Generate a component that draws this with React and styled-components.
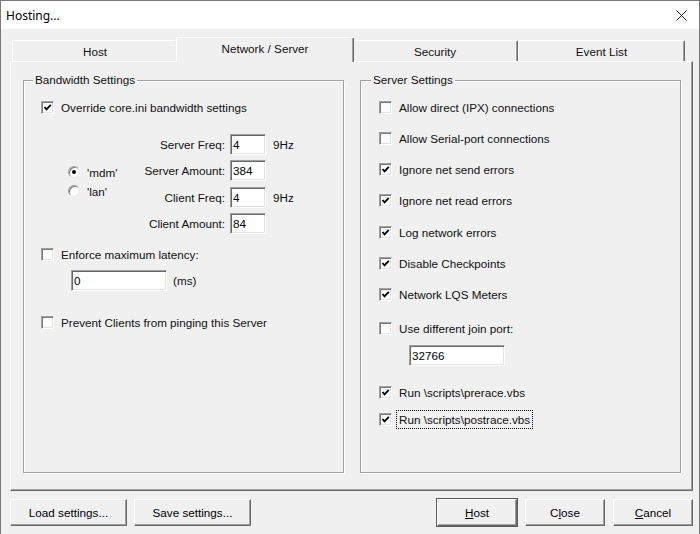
import React from 'react';
import styled, { createGlobalStyle } from 'styled-components';

const GlobalStyle = createGlobalStyle`
  html, body { margin: 0; padding: 0; background: #f0f0f0; }
  body {
    font-family: "Liberation Sans", Arial, sans-serif;
    font-size: 11.7px;
    color: #111;
  }
  #root { width: 700px; height: 534px; }
`;

const Window = styled.div`
  box-sizing: border-box;
  width: 700px;
  height: 534px;
  border: 1px solid #7a7a7a;
  border-bottom: none;
  background: #f0f0f0;
  display: flex;
  flex-direction: column;
`;

const TitleBar = styled.div`
  height: 28px;
  flex: none;
  background: #fff;
  display: flex;
  align-items: center;
  justify-content: space-between;
  padding: 0 12px 0 5px;
  font-family: "Noto Sans", "Open Sans", sans-serif;
  font-size: 12px;
  color: #000;
`;

const CloseIcon = styled.svg`
  width: 11px;
  height: 11px;
  display: block;
`;

const Content = styled.div`
  display: flex;
  flex-direction: column;
  padding: 8px 6px 0 9px;
`;

const TabStrip = styled.div`
  display: flex;
  align-items: flex-end;
  height: 24px;
  padding-left: 2px;
`;

const Tab = styled.div`
  box-sizing: border-box;
  width: ${p => p.$w}px;
  height: ${p => (p.$active ? 25 : 21)}px;
  margin: ${p => (p.$active ? '0 -2px -1px -2px' : '0')};
  position: relative;
  z-index: ${p => (p.$active ? 2 : 1)};
  display: flex;
  align-items: center;
  justify-content: center;
  padding-bottom: ${p => (p.$active ? 3 : 0)}px;
  background: #f0f0f0;
  border-top: 1px solid #fff;
  border-left: 1px solid #fff;
  border-right: 1px solid #696969;
  box-shadow: inset -1px 0 0 #a0a0a0;
  border-radius: 2px 2px 0 0;
`;

const Panel = styled.div`
  box-sizing: border-box;
  height: 430px;
  display: grid;
  grid-template-columns: 321px 321px;
  column-gap: 16px;
  padding: 11px 0 17px 12px;
  border-style: solid;
  border-width: 1px;
  border-color: #fff #696969 #696969 #fff;
  box-shadow: inset -1px -1px 0 #a0a0a0;
`;

const GroupBox = styled.fieldset`
  box-sizing: border-box;
  margin: 0;
  min-width: 0;
  padding: 0 0 0 ${p => p.$pl}px;
  border: 1px solid #a0a0a0;
  box-shadow: inset 1px 1px 0 #fff, 1px 1px 0 #fff;
  display: flex;
  flex-direction: column;
  align-items: flex-start;
`;

const GroupTitle = styled.legend`
  padding: 0 2px;
  margin-left: -8px;
  line-height: 14px;
  background: #f0f0f0;
`;

const CheckRow = styled.label`
  display: flex;
  align-items: center;
  gap: 7px;
  height: 15px;
  line-height: 15px;
  margin-top: ${p => p.$mt || 0}px;
  white-space: nowrap;
`;

const Box = styled.span`
  box-sizing: border-box;
  width: 13px;
  height: 13px;
  flex: none;
  background: #fff;
  border: 1px solid;
  border-color: #a0a0a0 #fff #fff #a0a0a0;
  box-shadow: inset 1px 1px 0 #7a7a7a, inset -1px -1px 0 #e3e3e3;
  display: flex;
  align-items: center;
  justify-content: center;
`;

const CheckText = styled.span`
  padding: 0 1px;
  margin-left: -1px;
  outline: ${p => (p.$focus ? '1px dotted #000' : 'none')};
  outline-offset: 1px;
`;

const FreqBlock = styled.div`
  display: flex;
  margin-top: 19px;
`;

const RadioCol = styled.div`
  display: flex;
  flex-direction: column;
  gap: 6px;
  width: 61px;
  margin-left: 27px;
  padding-top: 32px;
`;

const RadioRow = styled.label`
  display: flex;
  align-items: center;
  gap: 7px;
  height: 13px;
  line-height: 13px;
`;

const RadioDot = styled.span`
  box-sizing: border-box;
  width: 12px;
  height: 12px;
  flex: none;
  border-radius: 50%;
  background: #fff;
  border: 1px solid;
  border-color: #a0a0a0 #e8e8e8 #e8e8e8 #a0a0a0;
  box-shadow: inset 1px 1px 0 #808080;
  display: flex;
  align-items: center;
  justify-content: center;
  &::after {
    content: '';
    width: 4px;
    height: 4px;
    border-radius: 50%;
    background: ${p => (p.$checked ? '#000' : 'transparent')};
  }
`;

const FormGrid = styled.div`
  display: grid;
  grid-template-columns: 96px 36px auto;
  grid-auto-rows: 21px;
  column-gap: 5px;
  row-gap: 5.5px;
  align-items: center;
`;

const FieldLabel = styled.span`
  justify-self: end;
  white-space: nowrap;
`;

const Unit = styled.span`
  margin-left: 2px;
`;

const TextInput = styled.input`
  box-sizing: border-box;
  width: ${p => p.$w}px;
  height: 21px;
  margin: 0;
  padding: 0 2px;
  font: inherit;
  color: #000;
  background: #fff;
  border: 1px solid;
  border-color: #a0a0a0 #fff #fff #a0a0a0;
  box-shadow: inset 1px 1px 0 #696969, inset -1px -1px 0 #e3e3e3;
  outline: none;
`;

const IndentRow = styled.div`
  display: flex;
  align-items: center;
  gap: 6px;
  margin-top: ${p => p.$mt}px;
  margin-left: 30px;
`;

const CheckStack = styled.div`
  display: flex;
  flex-direction: column;
  gap: 16.3px;
  margin-top: 12.5px;
`;

const ButtonBar = styled.div`
  display: flex;
  justify-content: space-between;
  margin-top: 8px;
`;

const ButtonGroup = styled.div`
  display: flex;
  gap: ${p => p.$gap}px;
`;

const Button = styled.button`
  box-sizing: border-box;
  width: ${p => p.$w}px;
  height: 27px;
  margin: 0;
  padding: 0;
  font: inherit;
  color: #000;
  background: #f0f0f0;
  border: 1px solid;
  border-color: #fff #696969 #696969 #fff;
  box-shadow: ${p =>
    p.$default
      ? '0 0 0 1px #5a5a5a, inset -1px -1px 0 #a0a0a0'
      : 'inset -1px -1px 0 #a0a0a0'};
  u { text-decoration: underline; }
`;

function Check({ checked, children, mt, focus }) {
  return (
    <CheckRow $mt={mt}>
      <Box>
        {checked && (
          <svg width="9" height="9" viewBox="0 0 9 9">
            <polyline points="1.5,4 3.5,6.3 7.8,1.8" fill="none" stroke="#000" strokeWidth="1.9" />
          </svg>
        )}
      </Box>
      <CheckText $focus={focus}>{children}</CheckText>
    </CheckRow>
  );
}

export default function App() {
  return (
    <>
      <GlobalStyle />
      <Window>
        <TitleBar>
          <span>Hosting...</span>
          <CloseIcon viewBox="0 0 11 11">
            <line x1="0.5" y1="0.5" x2="10.5" y2="10.5" stroke="#222" strokeWidth="1" />
            <line x1="10.5" y1="0.5" x2="0.5" y2="10.5" stroke="#222" strokeWidth="1" />
          </CloseIcon>
        </TitleBar>
        <Content>
          <TabStrip>
            <Tab $w={166}>Host</Tab>
            <Tab $w={178} $active>Network / Server</Tab>
            <Tab $w={166}>Security</Tab>
            <Tab $w={167}>Event List</Tab>
          </TabStrip>
          <Panel>
            <GroupBox $pl={17}>
              <GroupTitle>Bandwidth Settings</GroupTitle>
              <Check checked mt={12.5}>Override core.ini bandwidth settings</Check>
              <FreqBlock>
                <RadioCol>
                  <RadioRow><RadioDot $checked />'mdm'</RadioRow>
                  <RadioRow><RadioDot />'lan'</RadioRow>
                </RadioCol>
                <FormGrid>
                  <FieldLabel>Server Freq:</FieldLabel>
                  <TextInput $w={36} value="4" readOnly />
                  <Unit>9Hz</Unit>
                  <FieldLabel>Server Amount:</FieldLabel>
                  <TextInput $w={36} value="384" readOnly />
                  <span />
                  <FieldLabel>Client Freq:</FieldLabel>
                  <TextInput $w={36} value="4" readOnly />
                  <Unit>9Hz</Unit>
                  <FieldLabel>Client Amount:</FieldLabel>
                  <TextInput $w={36} value="84" readOnly />
                  <span />
                </FormGrid>
              </FreqBlock>
              <Check mt={13}>Enforce maximum latency:</Check>
              <IndentRow $mt={7.5}>
                <TextInput $w={96} value="0" readOnly />
                <span>(ms)</span>
              </IndentRow>
              <Check mt={24.5}>Prevent Clients from pinging this Server</Check>
            </GroupBox>
            <GroupBox $pl={18}>
              <GroupTitle>Server Settings</GroupTitle>
              <CheckStack>
                <Check>Allow direct (IPX) connections</Check>
                <Check>Allow Serial-port connections</Check>
                <Check checked>Ignore net send errors</Check>
                <Check checked>Ignore net read errors</Check>
                <Check checked>Log network errors</Check>
                <Check checked>Disable Checkpoints</Check>
                <Check checked>Network LQS Meters</Check>
              </CheckStack>
              <Check mt={19}>Use different join port:</Check>
              <IndentRow $mt={8.5}>
                <TextInput $w={96} value="32766" readOnly />
              </IndentRow>
              <Check checked mt={19.5}>{'Run \\scripts\\prerace.vbs'}</Check>
              <Check checked mt={12} focus>{'Run \\scripts\\postrace.vbs'}</Check>
            </GroupBox>
          </Panel>
          <ButtonBar>
            <ButtonGroup $gap={7}>
              <Button $w={117}>Load settings...</Button>
              <Button $w={117}>Save settings...</Button>
            </ButtonGroup>
            <ButtonGroup $gap={8}>
              <Button $w={80} $default><u>H</u>ost</Button>
              <Button $w={80}>C<u>l</u>ose</Button>
              <Button $w={80}><u>C</u>ancel</Button>
            </ButtonGroup>
          </ButtonBar>
        </Content>
      </Window>
    </>
  );
}
